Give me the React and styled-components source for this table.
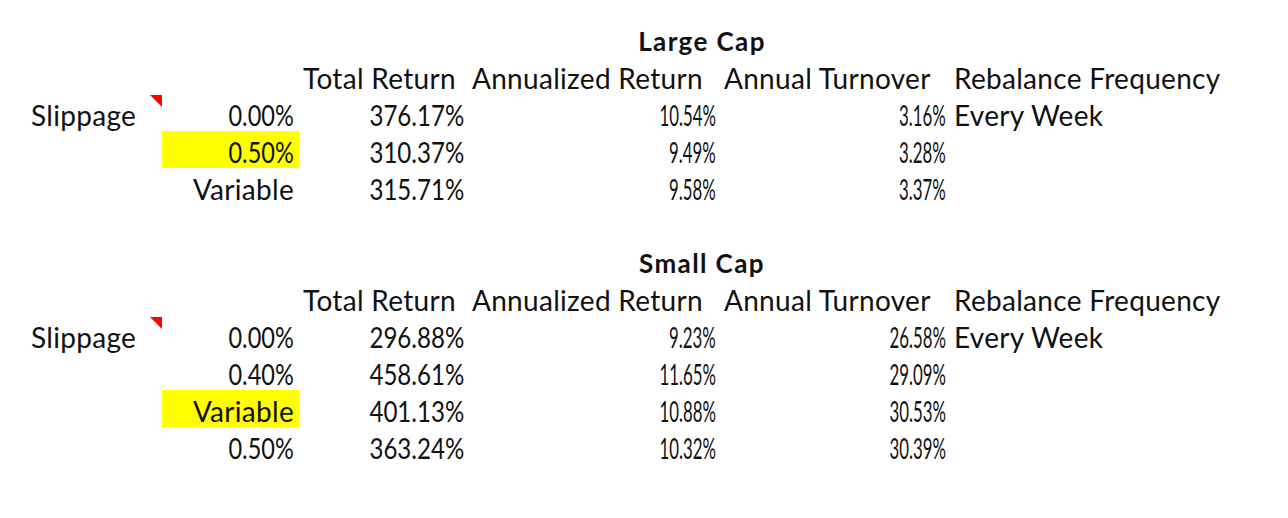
import React from "react";
import styled, { createGlobalStyle } from "styled-components";

const Global = createGlobalStyle`
  html, body { margin: 0; padding: 0; background: #ffffff; }
  body { font-family: Lato, "Noto Sans CJK SC", sans-serif; color: #111; }
`;

const Page = styled.div`
  width: 1288px;
  height: 518px;
  padding-top: 20px;
  box-sizing: border-box;
  overflow: hidden;
`;

const Grid = styled.div`
  display: grid;
  grid-template-columns: 162px 137px 167px 252px 230px 1fr;
  grid-auto-rows: 37px;
  margin-bottom: 37px;
`;

const Cell = styled.div`
  position: relative;
  box-sizing: border-box;
  height: 37px;
  line-height: 37px;
  padding-top: 3px;
  padding-left: ${(p) => (p.$align === "right" ? "0" : p.$pl || "6px")};
  padding-right: ${(p) => (p.$align === "right" ? p.$pr || "3px" : "0")};
  text-align: ${(p) => p.$align || "left"};
  font-size: 28px;
  letter-spacing: 0.3px;
  white-space: nowrap;
  background: ${(p) => (p.$hl ? "#ffff00" : "transparent")};
  grid-column: ${(p) => p.$col || "auto"};
`;

const Label = styled(Cell)`
  padding-left: 31px;
`;

const Title = styled.div`
  grid-column: 4 / 6;
  text-align: center;
  font-weight: 700;
  font-size: 26px;
  letter-spacing: 1.4px;
  line-height: 37px;
  padding-top: 3px;
  padding-right: 10px;
`;

const Num = styled.span`
  display: inline-block;
  letter-spacing: 0;
  transform: scaleX(${(p) => p.$scale || 0.85});
  transform-origin: right center;
`;

const Comment = styled.span`
  position: absolute;
  top: 1px;
  right: 0;
  width: 0;
  height: 0;
  border-top: 12px solid #ff0000;
  border-left: 12px solid transparent;
`;

const headers = ["Total Return", "Annualized Return", "Annual Turnover", "Rebalance Frequency"];

const sections = [
  {
    title: "Large Cap",
    rows: [
      { s: "0.00%", t: "376.17%", a: "10.54%", u: "3.16%", f: "Every Week" },
      { s: "0.50%", t: "310.37%", a: "9.49%", u: "3.28%", hl: true },
      { s: "Variable", t: "315.71%", a: "9.58%", u: "3.37%" },
    ],
  },
  {
    title: "Small Cap",
    rows: [
      { s: "0.00%", t: "296.88%", a: "9.23%", u: "26.58%", f: "Every Week" },
      { s: "0.40%", t: "458.61%", a: "11.65%", u: "29.09%" },
      { s: "Variable", t: "401.13%", a: "10.88%", u: "30.53%", hl: true },
      { s: "0.50%", t: "363.24%", a: "10.32%", u: "30.39%" },
    ],
  },
];

const isNum = (v) => /\d/.test(v);

function Section({ data }) {
  return (
    <Grid>
      <Title>{data.title}</Title>
      <Cell $col="3" $pl="4px">{headers[0]}</Cell>
      <Cell>{headers[1]}</Cell>
      <Cell>{headers[2]}</Cell>
      <Cell>{headers[3]}</Cell>
      {data.rows.map((r, i) => (
        <React.Fragment key={i}>
          <Label $col="1">
            {i === 0 ? "Slippage" : ""}
            {i === 0 && <Comment />}
          </Label>
          <Cell $align="right" $pr="5px" $hl={r.hl}>
            {isNum(r.s) ? <Num $scale={0.84}>{r.s}</Num> : r.s}
          </Cell>
          <Cell $align="right" $pr="2px"><Num $scale={0.86}>{r.t}</Num></Cell>
          <Cell $align="right" $pr="2px"><Num $scale={0.6}>{r.a}</Num></Cell>
          <Cell $align="right" $pr="2px"><Num $scale={0.6}>{r.u}</Num></Cell>
          <Cell>{r.f || ""}</Cell>
        </React.Fragment>
      ))}
    </Grid>
  );
}

export default function App() {
  return (
    <Page>
      <Global />
      {sections.map((s) => (
        <Section key={s.title} data={s} />
      ))}
    </Page>
  );
}
